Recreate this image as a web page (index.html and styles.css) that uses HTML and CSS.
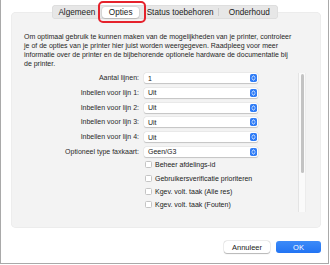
FILE: index.html
```html
<!DOCTYPE html>
<html>
<head>
<meta charset="utf-8">
<link rel="stylesheet" href="styles.css">
</head>
<body>
<div class="window">
  <div class="tabs-wrap">
    <div class="tabs">
      <div class="seg seg-1">Algemeen</div>
      <div class="seg seg-2"><span class="seg-sel">Opties</span></div>
      <div class="seg seg-3">Status toebehoren</div>
      <div class="sep"></div>
      <div class="seg seg-4">Onderhoud</div>
    </div>
    <div class="highlight"></div>
  </div>
  <div class="panel">
    <p class="intro">Om optimaal gebruik te kunnen maken van de mogelijkheden van je printer, controleer<br>je of de opties van je printer hier juist worden weergegeven. Raadpleeg voor meer<br>informatie over de printer en de bijbehorende optionele hardware de documentatie bij<br>de printer.</p>
    <div class="scroll">
      <div class="content">
        <div class="form">
          <label class="lbl">Aantal lijnen:</label>
          <div class="popup"><span>1</span><svg class="pi" viewBox="0 0 7 8"><rect width="7" height="8" rx="1.8"/><path d="M2 3.3L3.5 1.9L5 3.3M2 4.7L3.5 6.1L5 4.7"/></svg></div>
          <label class="lbl">Inbellen voor lijn 1:</label>
          <div class="popup"><span>Uit</span><svg class="pi" viewBox="0 0 7 8"><rect width="7" height="8" rx="1.8"/><path d="M2 3.3L3.5 1.9L5 3.3M2 4.7L3.5 6.1L5 4.7"/></svg></div>
          <label class="lbl">Inbellen voor lijn 2:</label>
          <div class="popup"><span>Uit</span><svg class="pi" viewBox="0 0 7 8"><rect width="7" height="8" rx="1.8"/><path d="M2 3.3L3.5 1.9L5 3.3M2 4.7L3.5 6.1L5 4.7"/></svg></div>
          <label class="lbl">Inbellen voor lijn 3:</label>
          <div class="popup"><span>Uit</span><svg class="pi" viewBox="0 0 7 8"><rect width="7" height="8" rx="1.8"/><path d="M2 3.3L3.5 1.9L5 3.3M2 4.7L3.5 6.1L5 4.7"/></svg></div>
          <label class="lbl">Inbellen voor lijn 4:</label>
          <div class="popup"><span>Uit</span><svg class="pi" viewBox="0 0 7 8"><rect width="7" height="8" rx="1.8"/><path d="M2 3.3L3.5 1.9L5 3.3M2 4.7L3.5 6.1L5 4.7"/></svg></div>
          <label class="lbl">Optioneel type faxkaart:</label>
          <div class="popup"><span>Geen/G3</span><svg class="pi" viewBox="0 0 7 8"><rect width="7" height="8" rx="1.8"/><path d="M2 3.3L3.5 1.9L5 3.3M2 4.7L3.5 6.1L5 4.7"/></svg></div>
        </div>
        <div class="checks">
          <div class="check"><span class="box"></span><span>Beheer afdelings-id</span></div>
          <div class="check"><span class="box"></span><span>Gebruikersverificatie prioriteren</span></div>
          <div class="check"><span class="box"></span><span>Kgev. volt. taak (Alle res)</span></div>
          <div class="check"><span class="box"></span><span>Kgev. volt. taak (Fouten)</span></div>
        </div>
      </div>
      <div class="scrollbar"><div class="thumb"></div></div>
    </div>
  </div>
  <div class="buttons">
    <div class="btn btn-cancel">Annuleer</div>
    <div class="btn btn-ok">OK</div>
  </div>
</div>
</body>
</html>
```
FILE: styles.css
```css
html, body {
  margin: 0;
  padding: 0;
  background: #ffffff;
}
body {
  font-family: "Liberation Sans", Arial, sans-serif;
  color: #262626;
}
.window {
  width: 327px;
  height: 263px;
  border: 1px solid #a9a9a9;
  border-top: none;
  background: #ffffff;
  display: flex;
  flex-direction: column;
}
.tabs-wrap {
  position: relative;
  z-index: 2;
  height: 14px;
  margin-top: 5px;
  display: flex;
  justify-content: flex-start;
  padding-left: 51px;
}
.tabs {
  display: flex;
  align-items: center;
  height: 14px;
  width: 226px;
  background: #e7e7e7;
  border-radius: 4px;
  box-shadow: inset 0 0 0 0.5px #d6d6d6;
  font-size: 8.2px;
  color: #222;
}
.seg {
  height: 14px;
  display: flex;
  align-items: center;
  justify-content: center;
  white-space: nowrap;
}
.seg-1 { width: 49px; padding-left: 1px; }
.seg-2 { width: 41px; }
.seg-3 { width: 77px; padding-left: 2px; }
.seg-4 { width: 59px; padding-left: 2px; }
.sep {
  width: 1px;
  height: 8px;
  background: #cfcfcf;
}
.seg-sel {
  display: flex;
  align-items: center;
  justify-content: center;
  width: 37px;
  height: 11px;
  background: #ffffff;
  border-radius: 3px;
  box-shadow: 0 0.5px 1.5px rgba(0,0,0,0.25), 0 0 0 0.5px rgba(0,0,0,0.06);
}
.highlight {
  position: absolute;
  left: 97px;
  top: -4px;
  width: 44px;
  height: 18px;
  border: 2px solid #e5222c;
  border-radius: 5px;
}
.panel {
  margin: -7px 7px 0 10px;
  height: 216px;
  box-sizing: border-box;
  background: #f3f3f3;
  border-radius: 5px;
  box-shadow: inset 0 0 0 0.5px #e6e6e6;
  padding: 20px 0 0 13px;
  display: flex;
  flex-direction: column;
}
.intro {
  margin: 0;
  font-size: 7px;
  line-height: 9px;
  white-space: nowrap;
  color: #262626;
}
.scroll {
  margin-top: 3px;
  margin-right: 15px;
  height: 141px;
  display: flex;
  overflow: hidden;
}
.content {
  flex: 1;
  overflow: hidden;
}
.form {
  display: grid;
  grid-template-columns: 115px 114px;
  column-gap: 5px;
  row-gap: 4.8px;
  margin-top: 2px;
  font-size: 7px;
}
.lbl {
  text-align: right;
  height: 10px;
  line-height: 10px;
  white-space: nowrap;
  color: #2a2a2a;
}
.popup {
  height: 10px;
  background: #ffffff;
  border-radius: 2px;
  box-shadow: 0 0.5px 1px rgba(0,0,0,0.18), 0 0 0 0.5px rgba(0,0,0,0.05);
  display: flex;
  align-items: center;
  justify-content: space-between;
  padding: 0 1px 0 4px;
  color: #222;
}
.pi {
  width: 7px;
  height: 8px;
  display: block;
}
.pi rect { fill: #2f7cf6; }
.pi path {
  fill: none;
  stroke: #ffffff;
  stroke-width: 0.9;
  stroke-linecap: round;
  stroke-linejoin: round;
}
.checks {
  margin-top: 1.3px;
  padding-left: 121px;
  font-size: 7px;
}
.check {
  height: 13.3px;
  display: flex;
  align-items: center;
  gap: 3px;
  white-space: nowrap;
  color: #222;
}
.box {
  width: 7px;
  height: 7px;
  box-sizing: border-box;
  background: #ffffff;
  border: 0.5px solid #c4c4c4;
  border-radius: 1.5px;
  flex: none;
}
.scrollbar {
  width: 8px;
  height: 139px;
  margin-top: 2px;
  box-sizing: border-box;
  background: #fafafa;
  border-left: 0.5px solid #e4e4e4;
  border-right: 0.5px solid #ececec;
  padding: 1px 1.5px;
}
.thumb {
  height: 99px;
  background: #c3c3c3;
  border-radius: 3px;
}
.buttons {
  display: flex;
  justify-content: flex-end;
  gap: 6px;
  margin: 13px 7px 0 0;
}
.btn {
  height: 12px;
  display: flex;
  align-items: center;
  justify-content: center;
  font-size: 7.5px;
  border-radius: 3px;
}
.btn-cancel {
  width: 46px;
  background: #ffffff;
  color: #222;
  box-shadow: 0 0.5px 1px rgba(0,0,0,0.25), 0 0 0 0.5px rgba(0,0,0,0.1);
}
.btn-ok {
  width: 45px;
  background: linear-gradient(#3d8bf8, #2274f3);
  color: #ffffff;
}
```
